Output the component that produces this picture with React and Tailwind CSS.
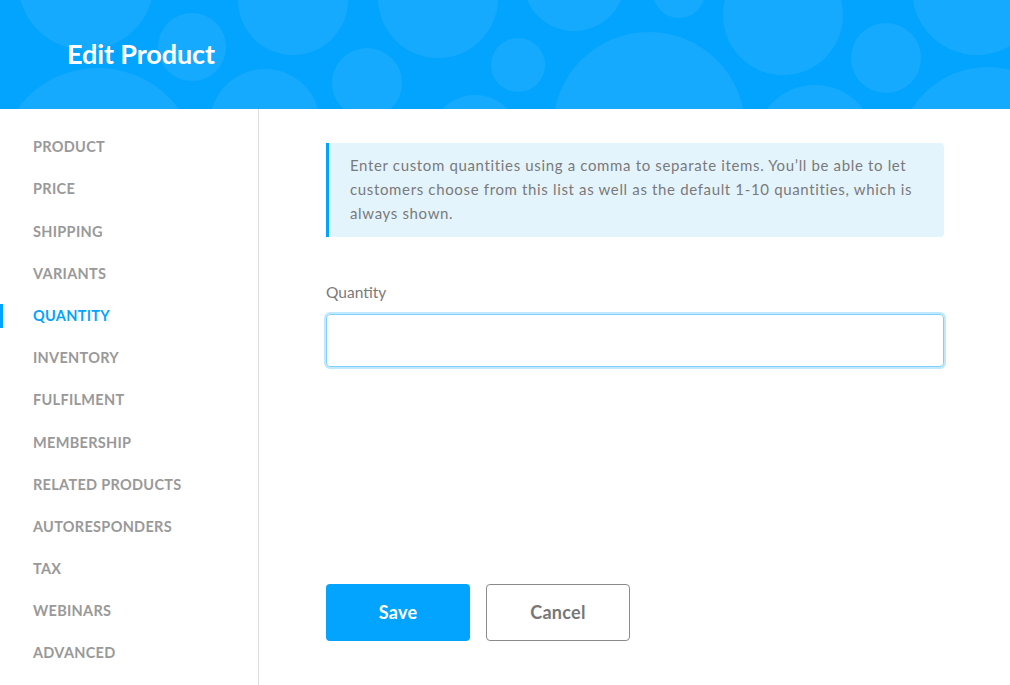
import React, { useState } from 'react';

const navItems = [
    'Product',
    'Price',
    'Shipping',
    'Variants',
    'Quantity',
    'Inventory',
    'Fulfilment',
    'Membership',
    'Related Products',
    'Autoresponders',
    'Tax',
    'Webinars',
    'Advanced',
];

// decorative bubbles in the header: [cx, cy, r]
const bubbles = [
    [86, -18, 68],
    [192, 47, 34],
    [98, 168, 100],
    [293, 0, 55],
    [438, -2, 60],
    [367, 83, 35],
    [265, 124, 55],
    [518, 65, 27],
    [475, 140, 45],
    [574, -20, 51],
    [679, -8, 26],
    [649, 128, 96],
    [783, 15, 60],
    [886, 58, 35],
    [977, -10, 65],
    [815, 145, 60],
    [988, 157, 90],
];

const HeaderBubbles = () => (
    <svg className="absolute inset-0 w-full h-full" viewBox="0 0 1010 109" preserveAspectRatio="xMinYMin slice">
        {bubbles.map(([cx, cy, r], i) => (
            <circle key={i} cx={cx} cy={cy} r={r} fill="#16aafe" />
        ))}
    </svg>
);

const App = () => {
    const [active, setActive] = useState('Quantity');
    const [quantity, setQuantity] = useState('');

    return (
        <div className="w-[1010px] h-[685px] flex flex-col bg-white overflow-hidden" style={{ fontFamily: 'Lato, "Open Sans", sans-serif' }}>
            {/* Header */}
            <header className="relative h-[109px] shrink-0 bg-[#03a4fe] overflow-hidden flex items-center">
                <HeaderBubbles />
                <h1 className="relative pl-[67px] text-[27px] font-bold text-white tracking-[-0.1px]">Edit Product</h1>
            </header>

            <div className="flex flex-1 min-h-0">
                {/* Sidebar */}
                <nav className="w-[259px] shrink-0 border-r border-[#dddddd] pt-[17px] flex flex-col">
                    {navItems.map((item) => {
                        const isActive = item === active;
                        return (
                            <button
                                key={item}
                                onClick={() => setActive(item)}
                                className="relative h-[42.2px] flex items-center pl-[33px] text-left"
                            >
                                {isActive && <span className="absolute left-0 top-[9px] w-[3px] h-[24px] bg-[#03a4fe]" />}
                                <span className={`text-[14.5px] font-bold uppercase tracking-[0.3px] ${isActive ? 'text-[#03a4fe]' : 'text-[#999999]'}`}>
                                    {item}
                                </span>
                            </button>
                        );
                    })}
                </nav>

                {/* Content */}
                <main className="flex-1 pl-[67px] pr-[66px] pt-[34px] pb-[44px] flex flex-col">
                    <div className="bg-[#e4f4fd] border-l-[3px] border-[#03a4fe] rounded-r-[4px] pl-[21px] pr-[24px] pt-[10px] pb-[12px]">
                        <p className="text-[15px] leading-[24px] text-[#7a7a7a] tracking-[0.65px]">
                            Enter custom quantities using a comma to separate items. You’ll be able to let customers choose from this list as well as the default 1-10 quantities, which is always shown.
                        </p>
                    </div>

                    <label className="mt-[44px] text-[15.5px] text-[#7a7a7a]">Quantity</label>
                    <input
                        type="text"
                        value={quantity}
                        onChange={(e) => setQuantity(e.target.value)}
                        className="mt-[10px] h-[53px] w-full rounded-[4px] border border-[#7fd0fc] px-3 text-[15px] text-[#555] outline-none shadow-[0_0_0_2px_#c2e8fd]"
                    />

                    <div className="mt-auto flex gap-[16px]">
                        <button className="w-[144px] h-[57px] rounded-[4px] bg-[#03a4fe] text-white text-[18px] font-bold tracking-[0.3px]">
                            Save
                        </button>
                        <button className="w-[144px] h-[57px] rounded-[4px] border border-[#8a8a8a] bg-white text-[#777777] text-[18px] font-bold tracking-[0.3px]">
                            Cancel
                        </button>
                    </div>
                </main>
            </div>
        </div>
    );
};

export default App;
